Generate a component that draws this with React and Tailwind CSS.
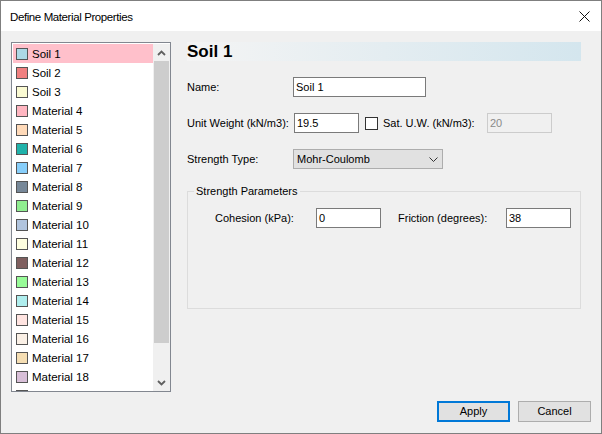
import React from 'react';

const materials = [
  { name: 'Soil 1', color: '#add8e6' },
  { name: 'Soil 2', color: '#f08080' },
  { name: 'Soil 3', color: '#fafad2' },
  { name: 'Material 4', color: '#ffb6c1' },
  { name: 'Material 5', color: '#ffdab9' },
  { name: 'Material 6', color: '#20b2aa' },
  { name: 'Material 7', color: '#87cefa' },
  { name: 'Material 8', color: '#778899' },
  { name: 'Material 9', color: '#90ee90' },
  { name: 'Material 10', color: '#b0c4de' },
  { name: 'Material 11', color: '#ffffe0' },
  { name: 'Material 12', color: '#7f5f5f' },
  { name: 'Material 13', color: '#98fb98' },
  { name: 'Material 14', color: '#afeeee' },
  { name: 'Material 15', color: '#ffe4e1' },
  { name: 'Material 16', color: '#faf0e6' },
  { name: 'Material 17', color: '#f5deb3' },
  { name: 'Material 18', color: '#d8bfd8' },
  { name: '', color: '#e0e0e0' },
];

const Chevron = ({ up }) => (
  <svg width="9" height="6" viewBox="0 0 9 6">
    <polyline
      points={up ? '1,5 4.5,1.5 8,5' : '1,1 4.5,4.5 8,1'}
      fill="none"
      stroke="#606060"
      strokeWidth="1.8"
    />
  </svg>
);

const TextBox = ({ value, className = '', disabled }) => (
  <div
    className={`h-[20px] shrink-0 flex items-center px-[2px] ${
      disabled ? 'border border-[#cccccc] bg-[#f0f0f0] text-[#8a8a8a]' : 'border border-[#7a7a7a] bg-white'
    } ${className}`}
  >
    {value}
  </div>
);

export default function App() {
  return (
    <div
      className="w-[602px] h-[434px] border border-[#7f7f7f] flex flex-col text-[11px] text-black bg-[#f0f0f0] whitespace-nowrap"
      style={{ fontFamily: '"Liberation Sans", Arial, sans-serif' }}
    >
      {/* title bar */}
      <div className="h-[30px] bg-white flex items-center justify-between pl-[9px] pr-[10px] shrink-0">
        <span className="text-[11.5px] tracking-[-0.4px] mt-[3px]">Define Material Properties</span>
        <svg width="11" height="11" viewBox="0 0 11 11" className="mr-[1px]">
          <path d="M0.5 0.5 L10.5 10.5 M10.5 0.5 L0.5 10.5" stroke="#111" strokeWidth="1" />
        </svg>
      </div>

      <div className="flex pt-[11px] pl-[10px]">
        {/* material list */}
        <div className="w-[160px] h-[350px] border border-[#828790] bg-white flex pl-px pt-px shrink-0">
          <div className="flex-1 overflow-hidden">
            {materials.map((m, i) => (
              <div
                key={i}
                className={`h-[19px] flex items-center pl-[3px] ${i === 0 ? 'bg-[#ffc0cb]' : ''}`}
              >
                <span
                  className="w-[12px] h-[12px] border border-[#555] shrink-0"
                  style={{ backgroundColor: m.color }}
                />
                <span className="ml-[4px] mt-[2px] text-[11.5px] leading-none">{m.name}</span>
              </div>
            ))}
          </div>
          <div className="w-[17px] flex flex-col bg-[#f0f0f0]">
            <div className="h-[17px] flex items-center justify-center">
              <Chevron up />
            </div>
            <div className="h-[282px] mx-px bg-[#cdcdcd]" />
            <div className="flex-1" />
            <div className="h-[17px] flex items-center justify-center">
              <Chevron />
            </div>
          </div>
        </div>

        {/* properties */}
        <div className="w-[394px] ml-[16px] flex flex-col">
          <div className="h-[19px] bg-gradient-to-r from-[#f4f4f4] to-[#d4e6ee] flex items-center">
            <span className="text-[17px] font-bold leading-none">Soil 1</span>
          </div>

          <div className="flex items-center mt-[16px]">
            <span className="w-[106px] shrink-0">Name:</span>
            <TextBox value="Soil 1" className="w-[133px]" />
          </div>

          <div className="flex items-center mt-[16px]">
            <span className="w-[107px] shrink-0">Unit Weight (kN/m3):</span>
            <TextBox value="19.5" className="w-[65px]" />
            <span className="ml-[6px] w-[13px] h-[13px] border border-[#333] bg-white shrink-0" />
            <span className="ml-[5px] w-[104px] shrink-0">Sat. U.W. (kN/m3):</span>
            <TextBox value="20" className="w-[65px]" disabled />
          </div>

          <div className="flex items-center mt-[16px]">
            <span className="w-[106px] shrink-0">Strength Type:</span>
            <div className="w-[150px] h-[20px] bg-[#e1e1e1] border border-[#adadad] flex items-center justify-between pl-[3px] pr-[4px]">
              <span>Mohr-Coulomb</span>
              <svg width="9" height="5" viewBox="0 0 9 5">
                <polyline points="0.5,0.5 4.5,4.5 8.5,0.5" fill="none" stroke="#333" strokeWidth="1" />
              </svg>
            </div>
          </div>

          <fieldset className="mt-[15px] h-[125px] border border-[#dcdcdc]">
            <legend className="ml-[6px] px-[2px] leading-[15px]">Strength Parameters</legend>
            <div className="flex items-center pl-[27px] mt-[9px]">
              <span className="w-[101px] shrink-0">Cohesion (kPa):</span>
              <TextBox value="0" className="w-[65px]" />
              <span className="ml-[17px] w-[108px] shrink-0">Friction (degrees):</span>
              <TextBox value="38" className="w-[65px]" />
            </div>
          </fieldset>
        </div>
      </div>

      {/* buttons */}
      <div className="flex justify-end gap-[8px] mt-[9px] pr-[10px]">
        <button className="w-[73px] h-[21px] bg-[#e1e1e1] border-2 border-[#0078d7] flex items-center justify-center">
          Apply
        </button>
        <button className="w-[73px] h-[21px] bg-[#e1e1e1] border border-[#adadad] flex items-center justify-center">
          Cancel
        </button>
      </div>
    </div>
  );
}
